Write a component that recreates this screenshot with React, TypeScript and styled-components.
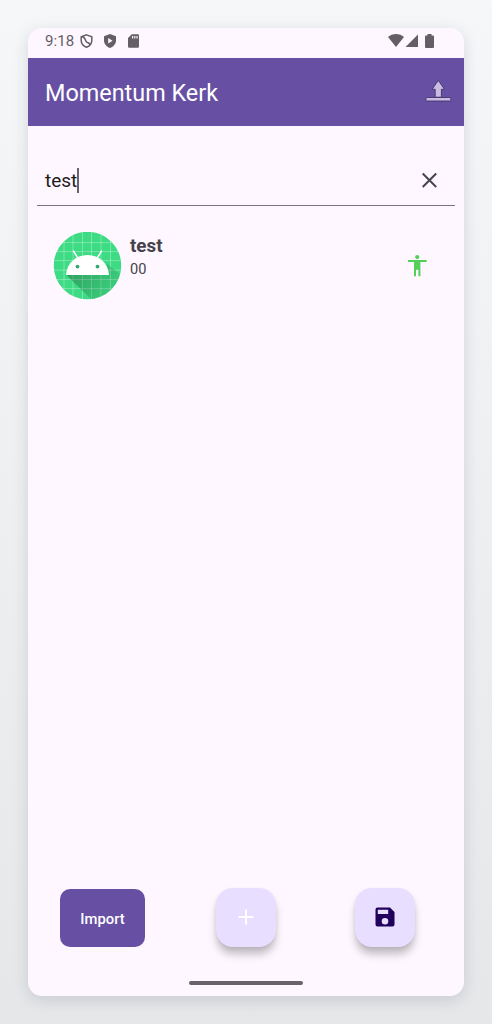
import React from 'react';
import styled, { createGlobalStyle } from 'styled-components';

const GlobalStyle = createGlobalStyle`
  * { box-sizing: border-box; }
  body { margin: 0; font-family: Roboto, "Liberation Sans", sans-serif; }
  svg { display: block; flex: none; }
`;

const Page = styled.div`
  height: 1024px;
  padding: 28px;
  background: linear-gradient(180deg, #f5f7f9 0%, #e5e7e9 100%);
`;

const Phone = styled.main`
  display: flex;
  flex-direction: column;
  height: 968px;
  border-radius: 14px;
  overflow: hidden;
  background: #fef7ff;
  box-shadow: 0 4px 16px rgba(40, 50, 60, 0.15);
`;

const StatusBar = styled.div`
  display: flex;
  justify-content: space-between;
  height: 30px;
  padding: 5px 30px 0 17px;
  color: #645e66;
`;

const Clock = styled.span`
  width: 35px;
  font-size: 15px;
  line-height: 17px;
  letter-spacing: 0.1px;
`;

const StatusGroup = styled.div`
  display: flex;
  align-items: flex-start;
`;

const StatusIcon = styled.svg<{ $gap?: number }>`
  margin: 1px 0 0 ${({ $gap = 0 }) => $gap}px;
`;

const AppBar = styled.header`
  display: flex;
  align-items: center;
  justify-content: space-between;
  height: 68px;
  padding: 0 12px 0 17px;
  background: #6750a4;
`;

const Title = styled.h1`
  margin: 2px 0 0;
  color: #fff;
  font-size: 23.4px;
  font-weight: 400;
  line-height: 30px;
`;

const SearchField = styled.div`
  display: flex;
  align-items: center;
  justify-content: space-between;
  height: 51px;
  margin: 29px 9px 0;
  padding: 0 18px 0 8px;
  border-bottom: 1px solid #7b747f;
`;

const Query = styled.div`
  display: flex;
  align-items: center;
  color: #1d1b20;
  font-size: 19px;
  line-height: 26px;
`;

const QueryText = styled.span`
  padding-top: 2px;
`;

const Caret = styled.span`
  width: 2px;
  height: 25px;
  margin-left: -0.5px;
  background: #69636d;
`;

const ContactRow = styled.section`
  display: flex;
  align-items: center;
  height: 68px;
  margin: 26px 37px 0 25px;
`;

const ContactText = styled.div`
  flex: 1;
  align-self: flex-start;
  padding: 2px 0 0 8px;
  color: #46424b;
`;

const Name = styled.div`
  font-size: 18.8px;
  font-weight: 700;
  line-height: 24px;
`;

const Detail = styled.div`
  font-size: 14.6px;
  line-height: 22px;
`;

const Actions = styled.footer`
  display: flex;
  align-items: center;
  height: 60px;
  margin: auto 48px 34px 32px;
`;

const ImportButton = styled.button`
  width: 85px;
  height: 58px;
  margin: 1px 71.400px 0 0;
  padding: 2px 0 0;
  border: 0;
  border-radius: 10px;
  background: #6750a4;
  color: #fff;
  font: 500 14.8px/20px Roboto, "Liberation Sans", sans-serif;
`;

const Fab = styled.button`
  display: grid;
  place-items: center;
  width: 60px;
  height: 59px;
  padding: 0;
  border: 0;
  border-radius: 17px;
  background: #e8deff;
  color: #21005d;
  box-shadow: 0 8px 9px -1px rgba(0, 0, 0, 0.25), 0 1px 4px rgba(0, 0, 0, 0.06);

  & + & {
    margin-left: 79px;
  }
`;

const HomeIndicator = styled.div`
  width: 114px;
  height: 4px;
  margin: 0 auto 11px;
  border-radius: 2px;
  background: #696269;
`;

const Avatar = () => (
  <svg width="69" height="68" viewBox="-.5 .4 69 68">
    <defs>
      <clipPath id="disc"><circle cx="34" cy="34" r="33.8" /></clipPath>
      <linearGradient id="shade" x1="12" y1="40" x2="48" y2="68" gradientUnits="userSpaceOnUse">
        <stop stopColor="#000" stopOpacity=".28" />
        <stop offset="1" stopColor="#000" stopOpacity=".08" />
      </linearGradient>
    </defs>
    <g clipPath="url(#disc)">
      <path fill="#3ddc84" d="M0 0h68v68H0z" />
      <path
        stroke="#fff" strokeOpacity=".38" strokeWidth=".8" fill="none"
        d="M10.500 0v68M19.500 0v68M29 0v68M38 0v68M47.500 0v68M57 0v68M0 11h68M0 20h68M0 29h68M0 38.500h68M0 48h68M0 57h68"
      />
      <path fill="url(#shade)" d="M12.700 43.300 38 68h42V53L53 32l2 11.300z" />
    </g>
    <path fill="#fff" d="M12.500 43.300C13.200 32 22 23.500 34 23.500S54.800 32 55.500 43.300z" />
    <path stroke="#fff" strokeWidth="1.500" strokeLinecap="round" d="m20 19.500 4.400 7M48 19.500l-4.400 7" />
    <circle cx="24" cy="35" r="1.900" fill="#35a66c" />
    <circle cx="44" cy="35" r="1.900" fill="#35a66c" />
  </svg>
);

export default function App() {
  return (
    <>
      <GlobalStyle />
      <Page>
        <Phone>
          <StatusBar>
            <StatusGroup>
              <Clock>9:18</Clock>
              <StatusIcon width="13" height="14" viewBox="0 0 13 14" fill="none" stroke="currentColor" strokeWidth="1.500">
                <path d="M6.500.9 11.800 2.800V6.500c0 3-2 5.500-5.300 6.700C3.200 12 1.200 9.500 1.200 6.500V2.800zM2 2.800c3.800.2 2.700 3.600 4.600 5.200 1.200 1 2.500.8 3.300 2.300" />
              </StatusIcon>
              <StatusIcon $gap={11} width="12" height="14" viewBox="0 0 12 14" fill="currentColor">
                <path fillRule="evenodd" d="M6 0 12 2.300v4.200c0 3.400-2.500 6.300-6 7.500-3.500-1.200-6-4.100-6-7.500V2.300zM4.200 4v5.400L8.600 6.700z" />
              </StatusIcon>
              <StatusIcon $gap={12} width="11" height="14" viewBox="0 0 11 14" fill="currentColor">
                <path fillRule="evenodd" d="M3.800.2H9.800Q11 .2 11 1.400v11.200q0 1.200-1.200 1.200H1.200Q0 13.800 0 12.600V4zM4 2v2.500h1.200V2zm2.200 0v2.500h1.200V2zm2.200 0v2.500h1.200V2z" />
              </StatusIcon>
            </StatusGroup>
            <StatusGroup>
              <StatusIcon width="16" height="14" viewBox="0 0 16 14" fill="currentColor">
                <path d="M0 3C2.200 1 5 0 8 0s5.800 1 8 3L8 13z" />
              </StatusIcon>
              <StatusIcon $gap={1} width="13" height="14" viewBox="0 0 13 14" fill="currentColor">
                <path d="M13 .5V13H.500z" />
              </StatusIcon>
              <StatusIcon $gap={7} width="9" height="14" viewBox="0 0 9 14" fill="currentColor">
                <path d="M2.500 0h4v1.400H8q1 0 1 1v10.500q0 1-1 1H1q-1 0-1-1V2.400q0-1 1-1h1.500z" />
              </StatusIcon>
            </StatusGroup>
          </StatusBar>

          <AppBar>
            <Title>Momentum Kerk</Title>
            <svg width="27" height="26" viewBox="0 0 27 26" fill="#c9bce3" stroke="#443268" strokeWidth=".9">
              <path d="m13.300 1.500 6.200 8.800h-3.100v7.900h-6.200v-7.900H7.100z" strokeLinejoin="round" />
              <rect x="1" y="18.500" width="24.800" height="3.500" rx=".6" />
            </svg>
          </AppBar>

          <SearchField>
            <Query><QueryText>test</QueryText><Caret /></Query>
            <svg width="16" height="16" viewBox="0 0 16 16" stroke="#49454f" strokeWidth="2">
              <path d="m1.700 1.500 13.500 13.500m0-13.500L1.700 15" />
            </svg>
          </SearchField>

          <ContactRow>
            <Avatar />
            <ContactText>
              <Name>test</Name>
              <Detail>00</Detail>
            </ContactText>
            <svg width="19" height="22" viewBox="0 .2 19 22" fill="#54cf58">
              <circle cx="9.200" cy="2.300" r="2.100" />
              <path d="M-.3 5.300h19v2h-6.300V21.500h-2v-6.500H8v6.500H6V7.300H-.3z" />
            </svg>
          </ContactRow>

          <Actions>
            <ImportButton>Import</ImportButton>
            <Fab aria-label="Add">
              <svg width="16" height="16" viewBox="0 0 16 16" stroke="#fff" strokeWidth="2">
                <path d="M8 .5v15M.5 8h15" />
              </svg>
            </Fab>
            <Fab aria-label="Save">
              <svg width="20" height="20" viewBox="0 0 20 20" fill="currentColor">
                <path fillRule="evenodd" d="M2.500.500H15l4.500 4.500v12.500q0 2-2 2h-15q-2 0-2-2v-15q0-2 2-2zM2.800 2.700v4.200h10.400V2.700zM10 10.900a3.300 3.300 0 1 0 0 6.600 3.300 3.300 0 0 0 0-6.600z" />
              </svg>
            </Fab>
          </Actions>
          <HomeIndicator />
        </Phone>
      </Page>
    </>
  );
}
